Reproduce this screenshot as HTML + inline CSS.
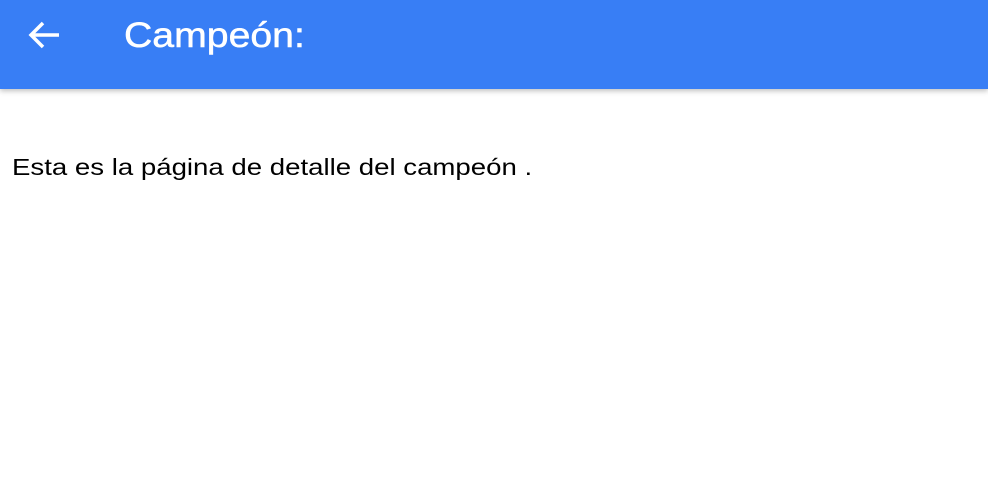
<!DOCTYPE html>
<html><head><style>
html,body{margin:0;padding:0;width:988px;height:496px;background:#fff;overflow:hidden;font-family:"Liberation Sans",sans-serif}
.hdr{position:absolute;left:0;top:0;width:988px;height:89px;background:#387ef5;box-shadow:0 2px 5px rgba(0,0,0,.25)}
.t{position:absolute;left:124px;top:16px;font-size:35px;color:#fff;line-height:40px;transform:scaleX(1.12);transform-origin:0 0;-webkit-text-stroke:0.5px #fff}
.b{position:absolute;left:12px;top:152px;font-size:23px;color:#000;line-height:30px;transform:scaleX(1.2);transform-origin:0 0}
</style></head><body>
<div class="hdr">
<svg style="position:absolute;left:26px;top:18px" width="36" height="34" viewBox="0 0 36 34"><path d="M33 17H5M17 5L5 17l12 12" stroke="#fff" stroke-width="3.5" fill="none"/></svg>
<div class="t">Campeón:</div>
</div>
<div class="b">Esta es la página de detalle del campeón .</div>
</body></html>
